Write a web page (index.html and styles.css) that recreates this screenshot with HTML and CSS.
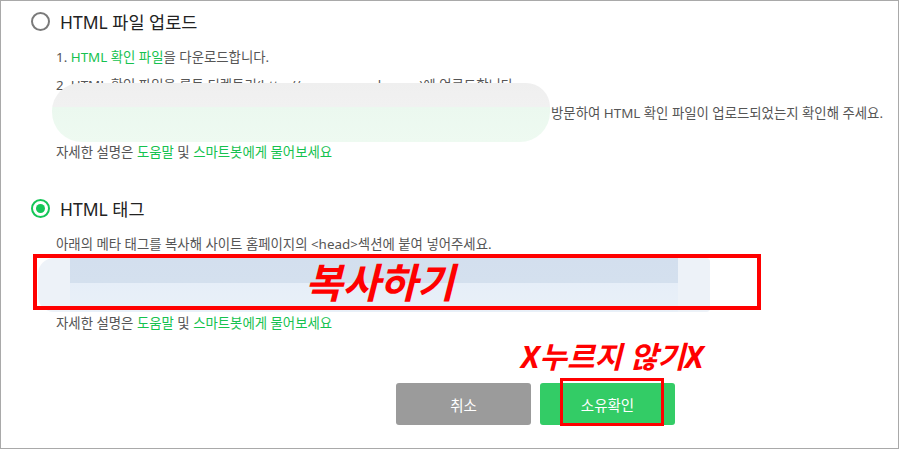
FILE: index.html
```html
<!DOCTYPE html>
<html lang="ko">
<head>
  <meta charset="UTF-8">
  <meta name="viewport" content="width=device-width, initial-scale=1.0">
  <title>사이트 소유확인</title>
  <link rel="stylesheet" href="styles.css">
</head>
<body>
  <div class="frame">

    <!-- HTML 파일 업로드 -->
    <section class="method">
      <label class="option">
        <span class="radio"></span>
        <span class="option-name">HTML 파일 업로드</span>
      </label>
      <ol class="steps">
        <li>1. <a href="#" class="green">HTML 확인 파일</a>을 다운로드합니다.</li>
        <li>2. HTML 확인 파일을 루트 디렉토리(http://www.example.com)에 업로드합니다.</li>
        <li class="step-last"><span class="hidden-url">3. 브라우저에서 http://www.example.com/naver0000.html 에</span>방문하여 HTML 확인 파일이 업로드되었는지 확인해 주세요.</li>
      </ol>
      <p class="help">자세한 설명은 <a href="#" class="green">도움말</a> 및 <a href="#" class="green">스마트봇에게 물어보세요</a></p>
      <div class="blur blur-url"></div>
    </section>

    <!-- HTML 태그 -->
    <section class="method method-tag">
      <label class="option">
        <span class="radio checked"></span>
        <span class="option-name">HTML 태그</span>
      </label>
      <p class="guide">아래의 메타 태그를 복사해 사이트 홈페이지의 &lt;head&gt;섹션에 붙여 넣어주세요.</p>
      <div class="meta-box"></div>
      <p class="help">자세한 설명은 <a href="#" class="green">도움말</a> 및 <a href="#" class="green">스마트봇에게 물어보세요</a></p>
    </section>

    <div class="actions">
      <button class="btn btn-cancel">취소</button>
      <button class="btn btn-ok">소유확인</button>
    </div>

    <!-- annotations -->
    <div class="mark mark-copy"></div>
    <div class="note note-copy">복사하기</div>
    <div class="note note-dont">X누르지 않기X</div>
    <div class="mark mark-btn"></div>
  </div>
</body>
</html>
```

FILE: styles.css
```css
body {
  margin: 0;
  padding: 0;
  background-color: #fff;
  font-family: "Noto Sans", "Noto Sans CJK KR", sans-serif;
}

.frame {
  position: relative;
  width: 899px;
  height: 449px;
  box-sizing: border-box;
  border: 1px solid #a9a9a9;
  padding-top: 10px;
  overflow: hidden;
}

.method {
  position: relative;
}

.method-tag {
  margin-top: 36px;
}

.option {
  display: flex;
  align-items: center;
  gap: 10px;
  height: 20px;
  margin-left: 30px;
}

.radio {
  width: 19px;
  height: 19px;
  box-sizing: border-box;
  border: 2px solid #7a7a7a;
  border-radius: 50%;
  display: flex;
  align-items: center;
  justify-content: center;
}

.radio.checked {
  border-color: #14c657;
}

.radio.checked::after {
  content: "";
  width: 9px;
  height: 9px;
  border-radius: 50%;
  background-color: #14c657;
}

.option-name {
  font-size: 17.5px;
  color: #222;
}

.steps {
  list-style: none;
  margin: 12px 0 0;
  padding-left: 55px;
  font-size: 13.4px;
  line-height: 28px;
  color: #555;
}

.step-last {
  display: flex;
  white-space: nowrap;
}

.hidden-url {
  width: 495px;
  overflow: hidden;
  color: transparent;
}

.help,
.guide {
  margin: 15px 0 0;
  padding-left: 55px;
  font-size: 13.4px;
  line-height: 20px;
  color: #555;
}

.guide {
  margin-top: 16px;
}

.method-tag .help {
  margin-top: 1px;
}

.green {
  color: #16c24f;
  text-decoration: none;
}

/* blurred url in step 2/3 */
.blur-url {
  position: absolute;
  left: 51px;
  top: 72px;
  width: 498px;
  height: 59px;
  border-radius: 28px 24px 30px 30px;
  background: linear-gradient(#efefef 0, #f1f1f1 24px, #ebf8ef 24px, #eefaf1 100%);
}

.meta-box {
  margin: 4px 0 0 37px;
  width: 672px;
  height: 54px;
  border-radius: 16px 4px 4px 16px;
  background: linear-gradient(90deg, #edf2f8 0, #edf2f8 32px, transparent 32px, transparent 640px, #edf2f8 640px),
              linear-gradient(#d3dfee 0, #d4e0ee 25px, #e6eef8 25px, #e9f0f8 100%);
}

.actions {
  display: flex;
  gap: 9px;
  margin-top: 50px;
  padding-left: 395px;
}

.btn {
  width: 135px;
  height: 42px;
  border: none;
  border-radius: 3px;
  color: #fff;
  font-family: "Noto Sans", "Noto Sans CJK KR", sans-serif;
  font-size: 14.5px;
  cursor: pointer;
}

.btn-cancel {
  background-color: #9b9b9b;
}

.btn-ok {
  background-color: #33cc66;
}

/* red annotations drawn over the screenshot */
.mark {
  position: absolute;
  box-sizing: border-box;
  border: 4px solid #ff0000;
}

.mark-copy {
  left: 32px;
  top: 253px;
  width: 728px;
  height: 56px;
}

.mark-btn {
  left: 559px;
  top: 377px;
  width: 104px;
  height: 48px;
  border-width: 3px;
}

.note {
  position: absolute;
  color: #ff0000;
  font-weight: bold;
  font-style: italic;
  white-space: nowrap;
}

.note-copy {
  left: 304px;
  top: 254px;
  font-size: 41px;
  line-height: 54px;
  letter-spacing: -0.5px;
}

.note-dont {
  left: 520px;
  top: 335px;
  font-size: 30px;
  line-height: 42px;
}
```
